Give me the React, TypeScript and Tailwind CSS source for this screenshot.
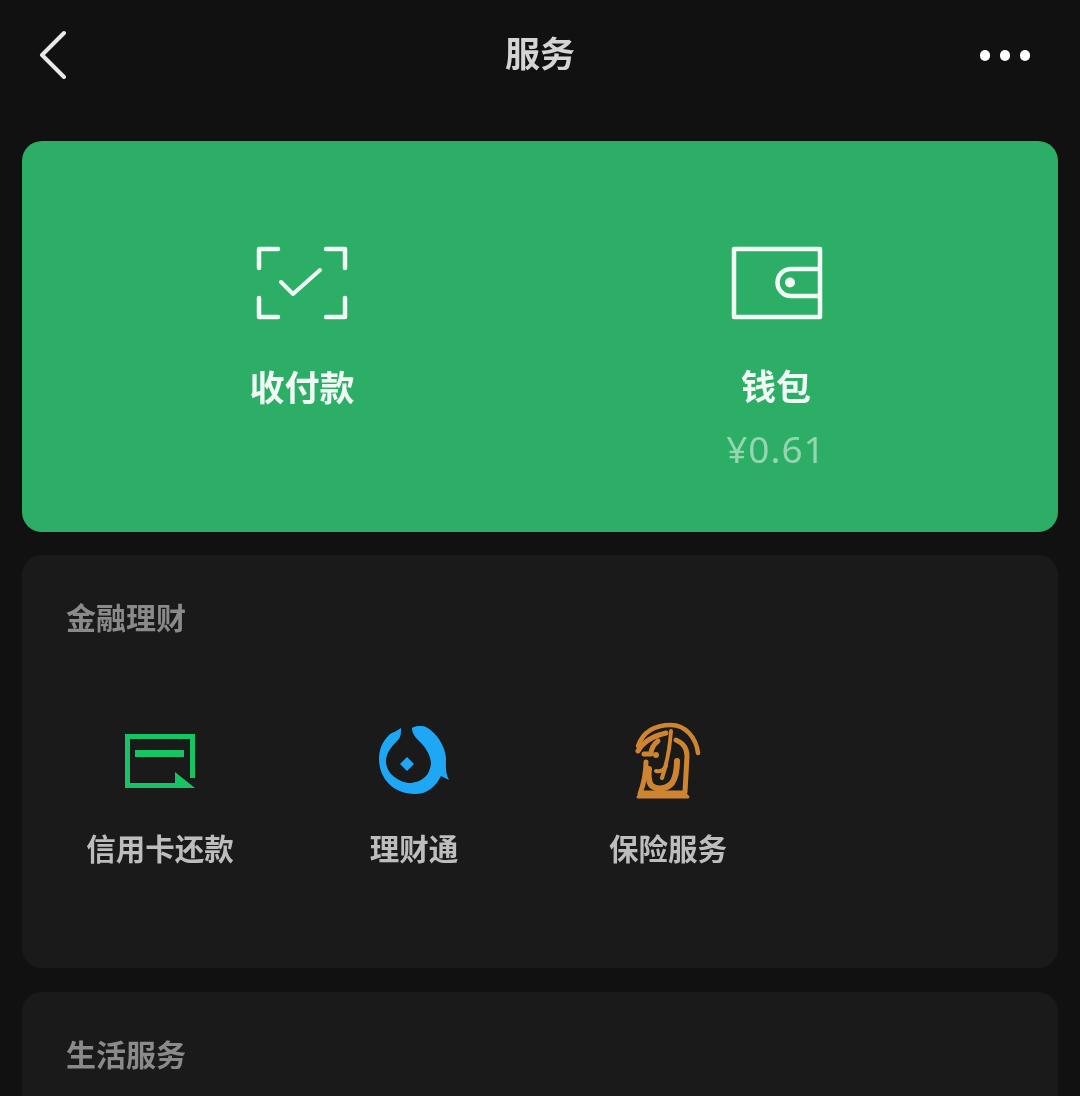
import React from 'react';

const cjk = "font-['Noto_Sans_CJK_SC','Noto_Sans',sans-serif]";

function ScanIcon() {
    return (
        <svg width="94" height="76" viewBox="0 0 94 76" fill="none" stroke="#f2faf5" strokeWidth="4.5" strokeLinecap="round" strokeLinejoin="round">
            <path d="M23 4H4v19M71 4h19v19M4 53v19h19M90 53v19H71" />
            <path d="M26 37l12 12 27-24" strokeWidth="4" />
        </svg>
    );
}

function WalletIcon() {
    return (
        <svg width="92" height="74" viewBox="0 0 92 74" fill="none" stroke="#f2faf5" strokeWidth="4.5" strokeLinejoin="round">
            <path d="M3 3h86v68H3z" />
            <path d="M89 23H60a13.5 13.5 0 0 0 0 27h29" />
            <circle cx="59" cy="36.5" r="5" fill="#f2faf5" stroke="none" />
        </svg>
    );
}

function CardIcon() {
    return (
        <svg width="70" height="54" viewBox="0 0 70 54" fill="none">
            <path d="M67.5 44V2.500H2.500v49H50" stroke="#17c463" strokeWidth="5" />
            <path d="M10 19.500h49" stroke="#17c463" strokeWidth="7" />
            <path d="M50 38l20 16H50z" fill="#17c463" />
        </svg>
    );
}

function LicaiIcon() {
    return (
        <svg width="70" height="70" viewBox="0 0 70 70" fill="#1ea7f5">
            <path d="M22 2C17 6 13 6 10 9 3 16 0 24 0 33c0 19 14 35 36 35 11 0 20-6 26-18l8 4c-4-8-3-14-3-22C66 20 58 7 47 1 42-1 36 0 33 2c0 6 4 10 8 14 6 6 11 14 11 22-1 6-3 10-5 12-5 5-11 7-17 7C20 56 7 48 7 35c0-9 7-16 13-22 2-3 2-7 2-11z" />
            <path d="M28 31l7 7-7 7-7-7z" />
        </svg>
    );
}

function InsuranceIcon() {
    return (
        <svg width="66" height="78" viewBox="0 0 66 78" fill="none" stroke="#cf8530" strokeLinecap="round" strokeLinejoin="round">
            <path d="M3 24C8 10 20 3 36 3c14 0 25 12 27 28" strokeWidth="4.5" />
            <path d="M3 29C8 20 18 14 31 11" strokeWidth="5" />
            <path d="M36 9c-1 16-4 32-9 47" strokeWidth="4" />
            <path d="M41 18c7 3 11 8 11 16l-2 36" strokeWidth="5" />
            <path d="M23 19c-5 4-7 8-7 13H9" strokeWidth="5" />
            <path d="M11 40c0 9-1 18-6 32" strokeWidth="5" />
            <path d="M14 47c-1 7 0 15 3 17 5 4 15 3 20-3 4-6 5-14 5-22" strokeWidth="6" />
            <path d="M21 49c4 1 8-1 10-5" strokeWidth="4" />
            <path d="M3 75l5-5h40l5 5z" fill="#cf8530" strokeWidth="3" />
            <circle cx="21" cy="33" r="3" fill="#cf8530" stroke="none" />
        </svg>
    );
}

const services = [
    { label: '信用卡还款', icon: <CardIcon /> },
    { label: '理财通', icon: <LicaiIcon /> },
    { label: '保险服务', icon: <InsuranceIcon /> },
];

export default function App() {
    return (
        <div className="w-[1080px] h-[1096px] overflow-hidden bg-[#111111]">
            <div className={`blur-[0.6px] ${cjk}`}>
                <div className="relative h-[141px] flex justify-center pt-[28px]">
                    <svg className="absolute left-[38px] top-[29px]" width="30" height="50" viewBox="0 0 30 50" fill="none" stroke="#e8e8e8" strokeWidth="4" strokeLinecap="round" strokeLinejoin="round">
                        <path d="M26 4L4 26l22 22" />
                    </svg>
                    <h1 className="text-[35px] leading-[48px] font-bold text-[#d4d4d4]">服务</h1>
                    <div className="absolute right-[50px] top-[50px] flex gap-[10px]">
                        <span className="w-[10px] h-[11px] rounded-full bg-white" />
                        <span className="w-[10px] h-[11px] rounded-full bg-white" />
                        <span className="w-[10px] h-[11px] rounded-full bg-white" />
                    </div>
                </div>

                <section className="mx-[22px] h-[391px] rounded-[20px] bg-[#2cae67] grid grid-cols-2 pl-[43px] pr-[45px] pt-[104px]">
                    <div className="flex flex-col items-center">
                        <ScanIcon />
                        <div className="mt-[40px] text-[35px] leading-[50px] font-bold text-[#f0f9f4]">收付款</div>
                    </div>
                    <div className="flex flex-col items-center">
                        <div className="pt-[1px] pl-[1px]"><WalletIcon /></div>
                        <div className="mt-[40px] text-[35px] leading-[50px] font-bold text-[#f0f9f4]">钱包</div>
                        <div className="mt-[17px] text-[37px] leading-[44px] tracking-[1px] text-[#93d6b0] font-['Noto_Sans',sans-serif]">¥0.61</div>
                    </div>
                </section>

                <section className="mx-[22px] mt-[23px] h-[413px] rounded-[20px] bg-[#1a1a1a] pt-[40px]">
                    <h2 className="pl-[44px] text-[30px] leading-[42px] font-bold text-[#8a8a8a]">金融理财</h2>
                    <div className="mt-[85px] grid grid-cols-4 pl-[11px] pr-[9px]">
                        {services.map((item) => (
                            <div key={item.label} className="flex flex-col items-center">
                                <div className="h-[78px] flex items-center justify-center">{item.icon}</div>
                                <div className="mt-[26px] text-[29.5px] leading-[42px] font-bold text-[#bdbdbd]">{item.label}</div>
                            </div>
                        ))}
                    </div>
                </section>

                <section className="mx-[22px] mt-[24px] h-[200px] rounded-[20px] bg-[#1a1a1a] pt-[40px]">
                    <h2 className="pl-[44px] text-[30px] leading-[42px] font-bold text-[#8a8a8a]">生活服务</h2>
                </section>
            </div>
        </div>
    );
}
